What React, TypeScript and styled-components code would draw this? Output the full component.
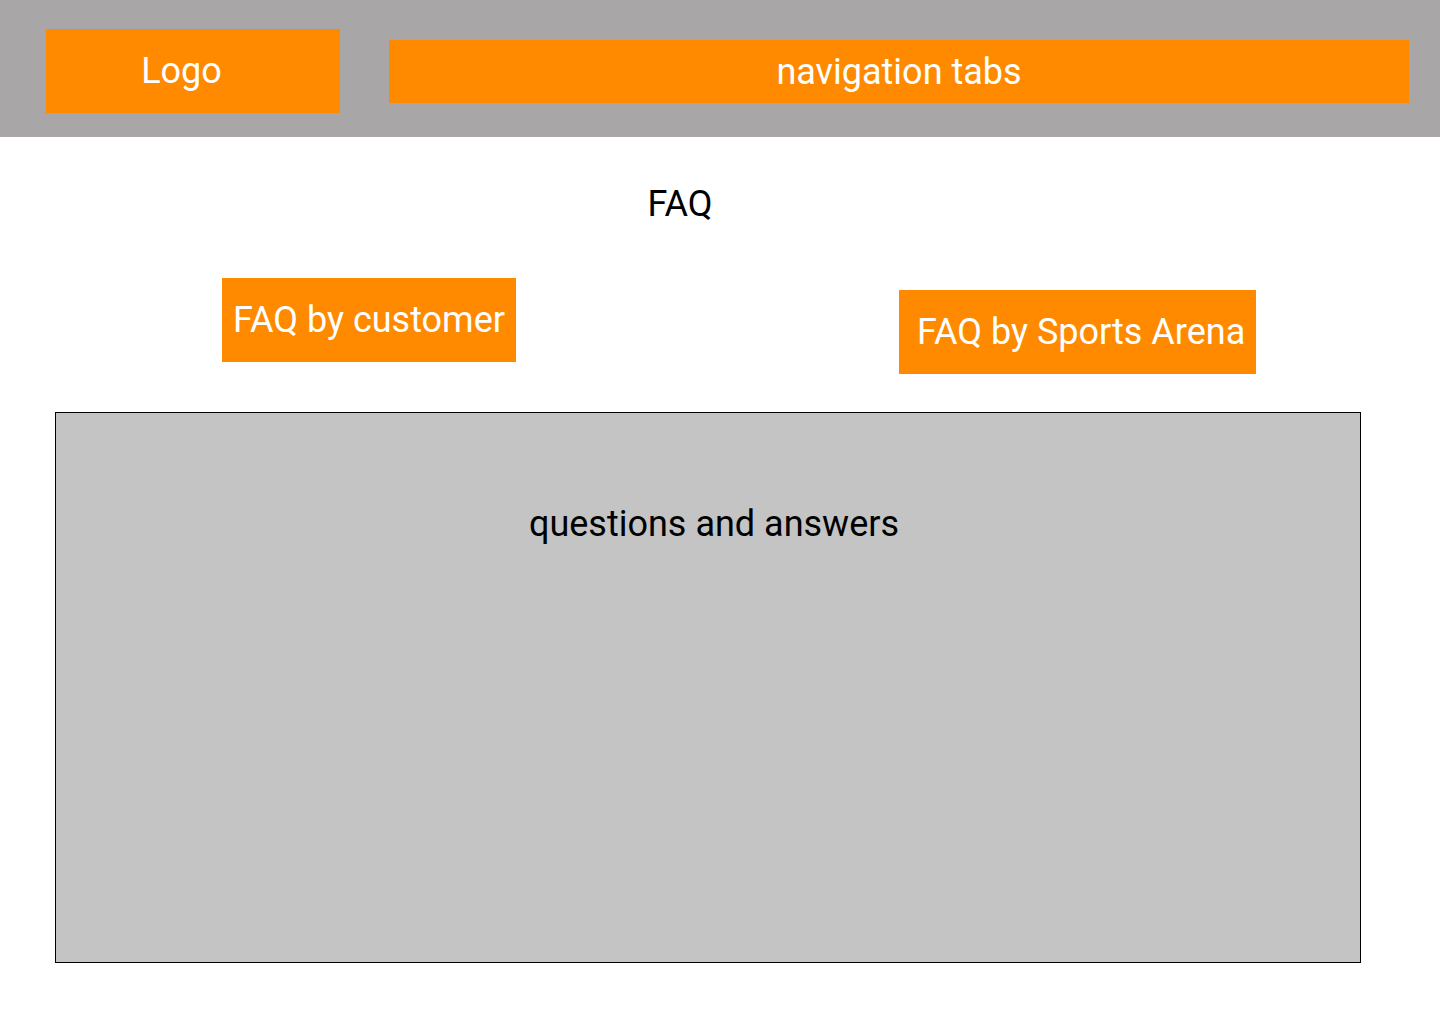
import React from "react";
import styled, { createGlobalStyle } from "styled-components";

const GlobalStyle = createGlobalStyle`
  html, body {
    margin: 0;
    padding: 0;
    background: #ffffff;
    font-family: Roboto, "Liberation Sans", Arial, sans-serif;
  }
  * { box-sizing: border-box; }
`;

const orange = "#FF8A00";

const Header = styled.header`
  display: flex;
  align-items: flex-start;
  height: 137px;
  padding: 29px 0 0 46px;
  gap: 49px;
  background: #a8a6a7;
`;

const Block = styled.div<{ $w: number; $h: number; $top?: number; $shift?: number }>`
  display: flex;
  align-items: center;
  justify-content: center;
  width: ${(p) => p.$w}px;
  height: ${(p) => p.$h}px;
  margin-top: ${(p) => p.$top ?? 0}px;
  padding-right: ${(p) => p.$shift ?? 0}px;
  background: ${orange};
  color: #ffffff;
  font-size: 36px;
  line-height: 42px;
  white-space: nowrap;
`;

const Title = styled.h1`
  margin: 0;
  padding: 46px 80px 0 0;
  text-align: center;
  font-weight: 400;
  font-size: 36px;
  line-height: 42px;
  color: #000000;
`;

const ButtonRow = styled.div`
  display: flex;
  align-items: flex-start;
  padding: 53px 0 0 222px;
  gap: 383px;
`;

const TabButton = styled.div<{ $w: number; $top?: number; $pad: number }>`
  display: flex;
  align-items: center;
  width: ${(p) => p.$w}px;
  height: 84px;
  margin-top: ${(p) => p.$top ?? 0}px;
  padding-left: ${(p) => p.$pad}px;
  background: ${orange};
  color: #ffffff;
  font-size: 36px;
  line-height: 42px;
  white-space: nowrap;
`;

const QABox = styled.section`
  margin: 38px 0 0 55px;
  width: 1306px;
  height: 551px;
  border: 1px solid #000000;
  background: #c4c4c4;
  padding: 90px 0 0 12px;
  text-align: center;
  font-size: 36px;
  line-height: 42px;
  color: #000000;
`;

export default function App() {
  return (
    <>
      <GlobalStyle />
      <Header>
        <Block $w={294} $h={84} $shift={23}>Logo</Block>
        <Block $w={1020} $h={63} $top={11}>navigation tabs</Block>
      </Header>
      <Title>FAQ</Title>
      <ButtonRow>
        <TabButton $w={294} $pad={11}>FAQ by customer</TabButton>
        <TabButton $w={357} $top={12} $pad={18}>FAQ by Sports Arena</TabButton>
      </ButtonRow>
      <QABox>questions and answers</QABox>
    </>
  );
}
